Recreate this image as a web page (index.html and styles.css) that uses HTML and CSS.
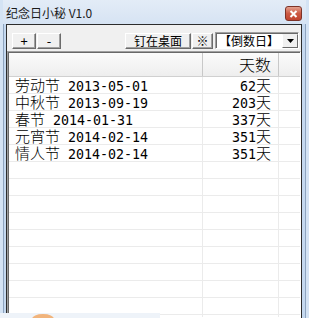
FILE: index.html
```html
<!DOCTYPE html>
<html lang="zh">
<head>
    <meta charset="UTF-8">
    <title>纪念日小秘 V1.0</title>
    <link rel="stylesheet" href="styles.css">
</head>
<body>
    <div class="window">
        <div class="frame">
            <div class="titlebar">
                <span class="title">纪念日小秘 V1.0</span>
                <span class="close">
                    <svg width="9" height="8" viewBox="0 0 9 8"><path d="M1.5 1 L7.5 7 M7.5 1 L1.5 7" stroke="#fff" stroke-width="2"/></svg>
                </span>
            </div>

            <div class="client">
                <!-- 工具栏 -->
                <div class="toolbar">
                    <button class="btn btn-sm">+</button>
                    <button class="btn btn-sm">-</button>
                    <div class="spacer"></div>
                    <button class="btn btn-pin">钉在桌面</button>
                    <button class="btn btn-mark">※</button>
                    <div class="combo">
                        <span class="combo-text">【倒数日】</span>
                        <span class="combo-arrow">
                            <svg width="7" height="4" viewBox="0 0 7 4"><path d="M0 0 H7 L3.5 4 Z" fill="#000"/></svg>
                        </span>
                    </div>
                </div>

                <!-- 列表 -->
                <div class="listview">
                    <div class="lv-header">
                        <div class="hcell c1"></div>
                        <div class="hcell c2">天数</div>
                        <div class="hcell c3"></div>
                    </div>
                    <div class="lv-body">
                        <div class="row"><div class="cell c1">劳动节<span class="num"> 2013-05-01</span></div><div class="cell c2"><span class="num">62</span>天</div><div class="cell c3"></div></div>
                        <div class="row"><div class="cell c1">中秋节<span class="num"> 2013-09-19</span></div><div class="cell c2"><span class="num">203</span>天</div><div class="cell c3"></div></div>
                        <div class="row"><div class="cell c1">春节<span class="num"> 2014-01-31</span></div><div class="cell c2"><span class="num">337</span>天</div><div class="cell c3"></div></div>
                        <div class="row"><div class="cell c1">元宵节<span class="num"> 2014-02-14</span></div><div class="cell c2"><span class="num">351</span>天</div><div class="cell c3"></div></div>
                        <div class="row"><div class="cell c1">情人节<span class="num"> 2014-02-14</span></div><div class="cell c2"><span class="num">351</span>天</div><div class="cell c3"></div></div>
                        <div class="row"><div class="cell c1"></div><div class="cell c2"></div><div class="cell c3"></div></div>
                        <div class="row"><div class="cell c1"></div><div class="cell c2"></div><div class="cell c3"></div></div>
                        <div class="row"><div class="cell c1"></div><div class="cell c2"></div><div class="cell c3"></div></div>
                        <div class="row"><div class="cell c1"></div><div class="cell c2"></div><div class="cell c3"></div></div>
                        <div class="row"><div class="cell c1"></div><div class="cell c2"></div><div class="cell c3"></div></div>
                        <div class="row"><div class="cell c1"></div><div class="cell c2"></div><div class="cell c3"></div></div>
                        <div class="row"><div class="cell c1"></div><div class="cell c2"></div><div class="cell c3"></div></div>
                        <div class="row"><div class="cell c1"></div><div class="cell c2"></div><div class="cell c3"></div></div>
                        <div class="row"><div class="cell c1"></div><div class="cell c2"></div><div class="cell c3"></div></div>
                        <div class="row"><div class="cell c1"></div><div class="cell c2"></div><div class="cell c3"></div></div>
                    </div>
                </div>
            </div>
        </div>

        <!-- 桌面上盖住窗口底部的提示条 -->
        <div class="desk-strip"><span class="blob"></span></div>
    </div>
</body>
</html>
```

FILE: styles.css
```css
* { margin: 0; padding: 0; box-sizing: border-box; }
body {
    width: 309px;
    height: 318px;
    overflow: hidden;
    font-family: "Noto Sans CJK SC", sans-serif;
    color: #000;
    background: #c9dcf1;
}
.window {
    position: relative;
    width: 309px;
    height: 318px;
    padding: 0 3px;
    background: #d4e3f4;
    overflow: hidden;
}
.frame {
    height: 100%;
    display: flex;
    flex-direction: column;
    border-left: 1px solid #8ea4bf;
    border-right: 1px solid #8ea4bf;
    background: #c4d8ef;
}
.titlebar {
    height: 24px;
    flex: none;
    display: flex;
    justify-content: space-between;
    padding: 0 4px 0 3px;
    margin: 0 -1px;
    background: linear-gradient(#e3ecf7, #d6e3f3);
}
.title {
    font-size: 12px;
    line-height: 26px;
    color: #1b1b1b;
}
.close {
    margin-top: 6px;
    width: 17px;
    height: 15px;
    display: flex;
    align-items: center;
    justify-content: center;
    border: 1px solid #7d3328;
    border-radius: 3px;
    background: linear-gradient(#e4a08e, #cc5a44 50%, #c0432f);
}
.client {
    flex: 1;
    margin: 0 3px 0 2px;
    border: 1px solid #2c2c2c;
    border-bottom: none;
    background: #f0f0f0;
    display: flex;
    flex-direction: column;
    overflow: hidden;
}
.toolbar {
    display: flex;
    align-items: center;
    padding: 7px 2px 2px 5px;
    flex: none;
}
.spacer { flex: 1; }
.btn {
    height: 16px;
    font-family: "Noto Sans CJK SC", sans-serif;
    font-size: 12px;
    line-height: 13px;
    color: #000;
    background: #f0f0f0;
    border: 1px solid;
    border-color: #fff #6b6b6b #6b6b6b #fff;
    box-shadow: inset -1px -1px #a0a0a0;
}
.btn-sm { width: 24px; margin-right: 1px; font-size: 13px; }
.btn-pin { width: 66px; margin-right: 1px; }
.btn-mark { width: 21px; margin-right: 2px; }
.combo {
    width: 84px;
    height: 17px;
    display: flex;
    align-items: stretch;
    background: #fff;
    border: 1px solid;
    border-color: #a0a0a0 #fff #fff #a0a0a0;
    box-shadow: inset 1px 1px #696969;
}
.combo-text {
    flex: 1;
    font-size: 12px;
    line-height: 15px;
    padding-left: 3px;
}
.combo-arrow {
    width: 16px;
    display: flex;
    align-items: center;
    justify-content: center;
    background: #f0f0f0;
    border: 1px solid;
    border-color: #f0f0f0 #6b6b6b #6b6b6b #fff;
    margin: 1px 0 0 0;
}
.listview {
    flex: 1;
    background: #fff;
    border: 1px solid;
    border-color: #a0a0a0 #fff #fff #a0a0a0;
    box-shadow: inset 1px 1px #696969;
    padding: 1px 0 0 1px;
    overflow: hidden;
}
.lv-header {
    display: flex;
    height: 24px;
    background: linear-gradient(#fbfbfb, #eeeeee);
    border-bottom: 1px solid #d0d0d0;
}
.hcell {
    font-size: 16px;
    font-weight: 300;
    line-height: 23px;
    border-right: 1px solid #c8c8c8;
    text-align: right;
    padding-right: 7px;
}
.c1 { width: 194px; flex: none; }
.c2 { width: 76px; flex: none; text-align: right; padding-right: 7px; }
.c3 { flex: 1; border-right: none; }
.row {
    display: flex;
    height: 17px;
    border-bottom: 1px solid #ebebeb;
}
.cell {
    font-size: 15px;
    font-weight: 300;
    line-height: 16px;
    border-right: 1px solid #ebebeb;
    white-space: nowrap;
}
.cell.c1 { padding-left: 6px; }
.cell.c3 { border-right: none; }
.num {
    font-family: "DejaVu Sans Mono", monospace;
    font-size: 13.3px;
    font-weight: normal;
}
.desk-strip {
    position: absolute;
    left: 0;
    top: 313px;
    width: 160px;
    height: 5px;
    background: #eef3f9;
}
.blob {
    position: absolute;
    left: 32px;
    top: 1px;
    width: 22px;
    height: 10px;
    border-radius: 50%;
    background: #f1b47c;
}
```
